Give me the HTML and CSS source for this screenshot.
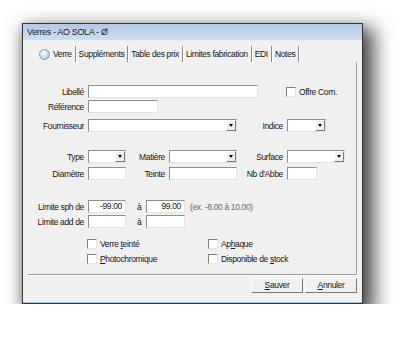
FILE: index.html
```html
<!DOCTYPE html>
<html lang="fr">
<head>
    <meta charset="UTF-8">
    <title>Verres - AO SOLA</title>
    <link rel="stylesheet" href="styles.css">
</head>
<body>
    <!-- fenêtre de dialogue -->
    <div class="window">
        <div class="titlebar">Verres - AO SOLA - Ø</div>

        <div class="client">
            <!-- onglets -->
            <div class="tabs">
                <span class="tab active"><span class="tab-icon"></span>Verre</span>
                <span class="tab">Suppléments</span>
                <span class="tab">Table des prix</span>
                <span class="tab">Limites fabrication</span>
                <span class="tab">EDI</span>
                <span class="tab">Notes</span>
            </div>

            <!-- contenu de l'onglet Verre -->
            <div class="panel">
                <div class="row r1">
                    <span class="lbl">Libellé</span>
                    <span class="field w170"></span>
                    <span class="check offre"><span class="box"></span><span>Offre Com.</span></span>
                </div>
                <div class="row r2">
                    <span class="lbl">Référence</span>
                    <span class="field w70"></span>
                </div>
                <div class="row r3">
                    <span class="lbl">Fournisseur</span>
                    <span class="field combo w149"><span class="drop"></span></span>
                    <span class="lbl-r">Indice</span>
                    <span class="field combo w39"><span class="drop"></span></span>
                </div>
                <div class="row r4">
                    <span class="lbl">Type</span>
                    <span class="field combo w38"><span class="drop"></span></span>
                    <span class="lbl-m">Matière</span>
                    <span class="field combo w68"><span class="drop"></span></span>
                    <span class="lbl-r">Surface</span>
                    <span class="field combo w58"><span class="drop"></span></span>
                </div>
                <div class="row r5">
                    <span class="lbl">Diamètre</span>
                    <span class="field w38"></span>
                    <span class="lbl-m">Teinte</span>
                    <span class="field w68"></span>
                    <span class="lbl-r">Nb d'Abbe</span>
                    <span class="field w30"></span>
                </div>
                <div class="row r6">
                    <span class="lbl">Limite sph de</span>
                    <span class="field num w38">-99.00</span>
                    <span class="lbl-a">à</span>
                    <span class="field num w39">99.00</span>
                    <span class="hint">(ex. -8.00 à 10.00)</span>
                </div>
                <div class="row r7">
                    <span class="lbl">Limite add de</span>
                    <span class="field w38"></span>
                    <span class="lbl-a">à</span>
                    <span class="field w39"></span>
                </div>
                <div class="checks c1">
                    <span class="check col1"><span class="box"></span><span>Verre <u>t</u>einté</span></span>
                    <span class="check"><span class="box"></span><span>Ap<u>h</u>aque</span></span>
                </div>
                <div class="checks c2">
                    <span class="check col1"><span class="box"></span><span><u>P</u>hotochromique</span></span>
                    <span class="check"><span class="box"></span><span>Disponible de <u>s</u>tock</span></span>
                </div>
            </div>

            <!-- boutons -->
            <div class="buttons">
                <span class="btn"><u>S</u>auver</span>
                <span class="btn"><u>A</u>nnuler</span>
            </div>
        </div>
    </div>
</body>
</html>
```

FILE: styles.css
```css
/* page */
body {
    margin: 0;
    background-color: #fff;
    font-family: "Liberation Sans", Arial, sans-serif;
    font-size: 8.5px;
    letter-spacing: -0.35px;
    color: #161616;
}

/* fenêtre */
.window {
    box-sizing: border-box;
    width: 341px;
    height: 281px;
    margin: 23px 0 0 22px;
    border: 1px solid #363636;
    background-color: #f0f0f0;
    box-shadow: 7px 9px 18px 4px rgba(0, 0, 0, 0.7), 0 2px 8px rgba(0, 0, 0, 0.15);
    display: flex;
    flex-direction: column;
}

.titlebar {
    height: 16px;
    line-height: 17px;
    padding-left: 4px;
    font-size: 9px;
    color: #222;
    background: linear-gradient(#b2c9e4, #cfdeef);
}

.client {
    flex: 1;
    padding: 5px 5px 0 5px;
    border-top: 1px solid #e4ebf3;
    box-shadow: inset 0 -1px 0 #9fc0df;
}

/* onglets */
.tabs {
    display: flex;
    align-items: center;
    height: 16px;
    padding-left: 10px;
}

.tab {
    display: flex;
    align-items: center;
    height: 16px;
    padding: 0 3px 0 2px;
    border-right: 1px solid #8a8a8a;
    box-shadow: 1px 0 0 #fff;
    margin-right: 1px;
}

.tab.active {
    padding-left: 1px;
    padding-right: 3px;
}

.tab-icon {
    width: 9px;
    height: 9px;
    margin-right: 3px;
    border: 1px solid #7d9bbb;
    border-radius: 50%;
    background: radial-gradient(circle at 40% 35%, #ffffff, #bcd9f2 60%, #86b6e0);
}

/* panneau */
.panel {
    height: 213px;
    padding-top: 23px;
    box-sizing: border-box;
    border-right: 1px solid #9a9a9a;
    border-bottom: 1px solid #9a9a9a;
    box-shadow: 1px 1px 0 #fff;
}

.row {
    display: flex;
    align-items: center;
    height: 13px;
}

.r2 { margin-top: 2px; }
.r3 { margin-top: 6px; }
.r4 { margin-top: 18px; }
.r5 { margin-top: 4px; }
.r6 { margin-top: 20px; }
.r7 { margin-top: 2px; }

.lbl {
    width: 56px;
    margin-right: 4px;
    text-align: right;
    white-space: nowrap;
}

.lbl-m {
    width: 39px;
    margin-right: 4px;
    text-align: right;
}

.lbl-r {
    width: 46px;
    margin-right: 4px;
    text-align: right;
}

.lbl-a {
    width: 9px;
    padding-left: 11px;
}

.hint {
    margin-left: 5px;
    color: #6a6a6a;
}

/* champs */
.field {
    position: relative;
    box-sizing: border-box;
    height: 13px;
    line-height: 11px;
    background-color: #fff;
    border: 1px solid;
    border-color: #8f8f8f #e2e2e2 #e2e2e2 #8f8f8f;
}

.num {
    text-align: right;
    padding-right: 3px;
}

.w30 { width: 30px; }
.w38 { width: 38px; }
.w39 { width: 39px; }
.w58 { width: 58px; }
.w68 { width: 68px; }
.w70 { width: 70px; }
.w149 { width: 149px; }
.w170 { width: 170px; }

/* flèche de liste déroulante */
.drop {
    position: absolute;
    top: 0;
    right: 0;
    width: 10px;
    height: 11px;
    box-sizing: border-box;
    background-color: #f0f0f0;
    border: 1px solid;
    border-color: #fff #7a7a7a #7a7a7a #fff;
}

.drop::after {
    content: "";
    position: absolute;
    left: 2px;
    top: 3px;
    border-left: 2px solid transparent;
    border-right: 2px solid transparent;
    border-top: 3px solid #000;
}

/* cases à cocher */
.check {
    display: flex;
    align-items: center;
    white-space: nowrap;
}

.offre {
    margin-left: 28px;
}

.box {
    box-sizing: border-box;
    width: 10px;
    height: 10px;
    margin-right: 3px;
    background-color: #fff;
    border: 1px solid;
    border-color: #7f7f7f #e6e6e6 #e6e6e6 #7f7f7f;
}

.checks {
    display: flex;
    height: 10px;
    padding-left: 59px;
}

.c1 { margin-top: 11px; }
.c2 { margin-top: 5px; }

.col1 {
    width: 121px;
}

/* boutons */
.buttons {
    display: flex;
    justify-content: flex-end;
    gap: 2px;
    margin-top: 3px;
}

.btn {
    box-sizing: border-box;
    width: 52px;
    height: 15px;
    line-height: 13px;
    text-align: center;
    background-color: #f0f0f0;
    border: 1px solid;
    border-color: #fff #7a7a7a #7a7a7a #fff;
}
```
